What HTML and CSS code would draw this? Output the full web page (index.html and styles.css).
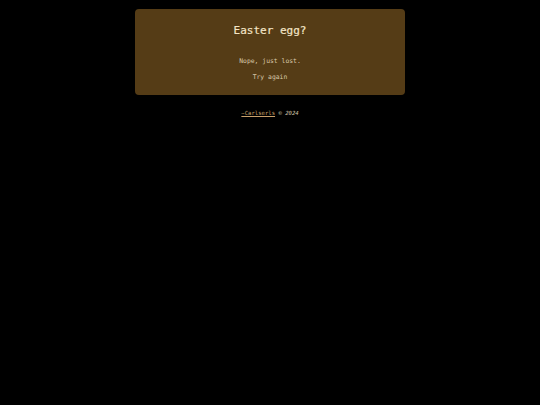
FILE: index.html
```html
<!DOCTYPE html>
<html>
<head>
<meta charset="utf-8">
<link rel="stylesheet" href="styles.css">
</head>
<body>
<main class="card">
  <h1 class="title">Easter egg?</h1>
  <p class="msg">Nope, just lost.</p>
  <a class="retry" href="#">Try again</a>
</main>
<footer class="foot"><a class="author" href="#">~Carlserls</a> <span class="copy">© 2024</span></footer>
</body>
</html>
```
FILE: styles.css
```css
html, body {
  margin: 0;
  padding: 0;
  background: #000;
  font-family: "DejaVu Sans Mono", monospace;
}
.card {
  width: 270px;
  height: 86px;
  box-sizing: border-box;
  margin: 9px auto 0;
  background: #553c16;
  border-radius: 4px;
  display: flex;
  flex-direction: column;
  align-items: center;
  padding-top: 15px;
}
.title {
  margin: 0;
  font-size: 11px;
  line-height: 14px;
  font-weight: normal;
  color: #f3e4c6;
  -webkit-text-stroke: 0.2px #f3e4c6;
}
.msg {
  margin: 19px 0 0;
  font-size: 6.4px;
  line-height: 9px;
  color: #d8c8aa;
}
.retry {
  margin-top: 7px;
  font-size: 6.4px;
  line-height: 9px;
  color: #d8c8aa;
  text-decoration: none;
}
.foot {
  text-align: center;
  margin-top: 14px;
  font-size: 5.6px;
  line-height: 8px;
  color: #cfc2a8;
}
.author {
  color: #c9a06a;
  text-decoration: underline;
}
.copy {
  font-style: italic;
}
```
